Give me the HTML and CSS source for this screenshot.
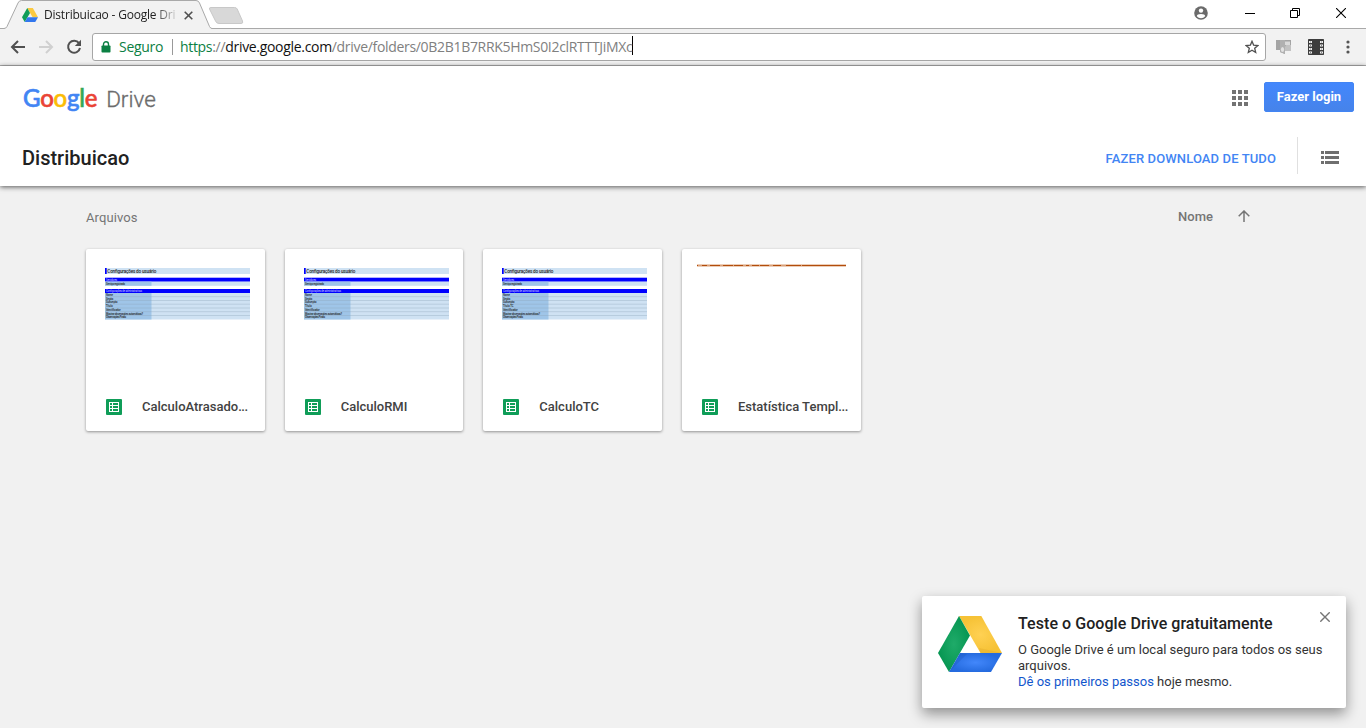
FILE: index.html
```html
<!DOCTYPE html>
<html lang="pt-BR">
<head>
<meta charset="utf-8">
<title>Distribuicao - Google Drive</title>
<link rel="stylesheet" href="styles.css">
</head>
<body>
<svg class="defs" width="0" height="0">
  <symbol id="drive" viewBox="0 0 64 56">
    <path d="M21 0H43.300L64 37H42.500Z" fill="#fbc941"/>
    <path d="M21 0L32 19.500L11 56L0 37Z" fill="#0f9d58"/>
    <path d="M22 37H64L53 56H11Z" fill="#3277ee"/>
  </symbol>
  <symbol id="sheet-icon" viewBox="0 0 16 16">
    <rect width="16" height="16" rx="1" fill="#0f9d58"/>
    <path d="M3 3h10v10H3z" fill="#fff"/>
    <path d="M4 4h2v2H4zM7 4h5v2H7zM4 7h2v2H4zM7 7h5v2H7zM4 10h2v2H4zM7 10h5v2H7z" fill="#0f9d58"/>
  </symbol>
  <symbol id="sheet-bg" viewBox="0 0 146 52">
    <rect width="145" height="6" fill="#cfe2f3"/>
    <rect width="1.700" height="6" fill="#00f"/>
    <rect y="9.700" width="145" height="4" fill="#00f"/>
    <rect y="13.700" width="145" height="4.100" fill="#cfe2f3"/>
    <rect y="13.700" width="46.500" height="4.100" fill="#9fc5e8"/>
    <rect y="21" width="145" height="4" fill="#00f"/>
    <rect y="25" width="145" height="26.500" fill="#cfe2f3"/>
    <rect y="25" width="46.500" height="26.500" fill="#9fc5e8"/>
    <path d="M0 28.700H145M0 32.500H145M0 36.200H145M0 40H145M0 43.700H145M0 47.500H145" stroke="#8ba3b8" stroke-width=".35"/>
  </symbol>
</svg>

<div class="tabstrip">
  <svg class="tabs" width="250" height="30" viewBox="0 0 250 30">
    <path d="M0 28.500H4Q6 28.500 7 26.500L18 3Q19 .5 21.500 .5H196Q198.500 .5 199.500 3L209.500 26.500Q210.500 28.500 212 28.500H250V30H0Z" fill="#f2f2f2"/>
    <path d="M0 28.500H4Q6 28.500 7 26.500L18 3Q19 .5 21.500 .5H196Q198.500 .5 199.500 3L209.500 26.500Q210.500 28.500 212 28.500H250" fill="none" stroke="#a9a9a9"/>
    <path d="M211 7.500H234.500Q236.500 7.500 237.200 9L242.500 21Q243.500 23.500 241 23.500H219Q216.500 23.500 215.500 21L209.500 9Q209 7.500 211 7.500Z" fill="#d8d8d8" stroke="#c8c8c8"/>
  </svg>
  <div class="tab">
    <svg width="16" height="14"><use href="#drive"/></svg>
    <span class="tab-title">Distribuicao - Google Dri</span>
    <svg width="9" height="9" viewBox="0 0 9 9"><path d="M.7 .7L8.300 8.300M8.300 .7L.7 8.300" stroke="#505050" stroke-width="1.600"/></svg>
  </div>
  <div class="window">
    <svg width="14" height="14" viewBox="0 0 14 14"><circle cx="7" cy="7" r="6.800" fill="#6b6b6b"/><circle cx="7" cy="4.600" r="2.200" fill="#fff"/><path d="M2.800 10.200Q3 8 7 8T11.200 10.200Q9.500 12.300 7 12.300T2.800 10.200Z" fill="#fff"/></svg>
    <svg class="min" width="10" height="10" viewBox="0 0 10 10"><path d="M0 5.500H10" stroke="#000"/></svg>
    <svg width="10" height="10" viewBox="0 0 10 10"><path d="M.5 2.500H7.500V9.500H.5ZM2.500 2.500V.5H9.500V7.500H7.500" fill="none" stroke="#000"/></svg>
    <svg width="10" height="10" viewBox="0 0 10 10"><path d="M0 0L10 10M10 0L0 10" stroke="#000" stroke-width="1.100"/></svg>
  </div>
</div>

<div class="toolbar">
  <svg width="84" height="18" viewBox="0 0 84 18">
    <path d="M25 9H12.500M18 3L12 9L18 15" fill="none" stroke="#505050" stroke-width="2"/>
    <path d="M39 9H51.500M46 3L52 9L46 15" fill="none" stroke="#d0d0d0" stroke-width="2"/>
    <path d="M79 5.200A6 6 0 1 0 80 10" fill="none" stroke="#505050" stroke-width="2"/><path d="M81 1.800V8H74.800Z" fill="#505050"/>
  </svg>
  <div class="omnibox">
    <svg width="10" height="12" viewBox="0 0 10 12"><path d="M2.500 5V3.300A2.500 2.500 0 0 1 7.500 3.300V5" fill="none" stroke="#0b8043" stroke-width="1.400"/><rect x=".5" y="4.500" width="9" height="7" rx=".8" fill="#0b8043"/></svg>
    <span class="secure">Seguro</span>
    <span class="url"><span class="green">https</span>://<span class="host">drive.google.com</span>/drive/folders/0B2B1B7RRK5HmS0I2clRTTTJiMXc</span>
    <svg class="star" width="14" height="14" viewBox="0 0 14 14"><path d="M7 1.300L8.600 5.100L12.900 5.500L9.700 8.300L10.700 12.500L7 10.300L3.300 12.500L4.300 8.300L1.100 5.500L5.400 5.100Z" fill="none" stroke="#505050" stroke-width="1.300"/></svg>
  </div>
  <div class="ext">
    <svg width="16" height="16" viewBox="0 0 16 16"><path d="M0 1H15V12H9V15L4 13V11H0Z" fill="#a4a4a4"/><path d="M9 2.500H14V6H9Z" fill="#dadada"/><path d="M10 6H15V12H9V8Z" fill="#c2c2c2"/><path d="M4 1H9V15L4 13Z" fill="#b0b0b0"/><ellipse cx="6.500" cy="10.500" rx="1.600" ry="2.500" fill="#e2e2e2"/></svg>
    <svg width="16" height="16" viewBox="0 0 16 16"><rect width="16" height="16" rx=".7" fill="#3d3d3d"/><path d="M1 2h3v2H1zM1 5.500h3v2H1zM1 9h3v2H1zM1 12.500h3v2H1zM12 2h3v2h-3zM12 5.500h3v2h-3zM12 9h3v2h-3zM12 12.500h3v2h-3z" fill="#eee"/><path d="M2 2.500h1v1H2zM2 6h1v1H2zM2 9.500h1v1H2zM2 13h1v1H2zM13 2.500h1v1h-1zM13 6h1v1h-1zM13 9.500h1v1h-1zM13 13h1v1h-1z" fill="#888"/></svg>
    <svg width="4" height="14" viewBox="0 0 4 14"><g fill="#555"><circle cx="2" cy="2" r="1.600"/><circle cx="2" cy="7" r="1.600"/><circle cx="2" cy="12" r="1.600"/></g></svg>
  </div>
</div>

<header class="header">
  <div class="brand-row">
    <div class="logo"><span class="google"><span class="b">G</span><span class="r">o</span><span class="y">o</span><span class="b">g</span><span class="g">l</span><span class="r">e</span></span><span class="product">Drive</span></div>
    <svg class="apps" width="16" height="16" viewBox="0 0 16 16"><path d="M0 0h4v4H0zM6 0h4v4H6zM12 0h4v4h-4zM0 6h4v4H0zM6 6h4v4H6zM12 6h4v4h-4zM0 12h4v4H0zM6 12h4v4H6zM12 12h4v4h-4z" fill="#737373"/></svg>
    <button class="login">Fazer login</button>
  </div>
  <div class="folder-row">
    <h1 class="folder">Distribuicao</h1>
    <span class="download">FAZER DOWNLOAD DE TUDO</span>
    <div class="view"><svg width="18" height="13" viewBox="0 0 18 13"><path d="M0 0h3v3H0zM4 0h14v3H4zM0 5h3v3H0zM4 5h14v3H4zM0 10h3v3H0zM4 10h14v3H4z" fill="#6f6f6f"/></svg></div>
  </div>
</header>

<main class="content">
  <div class="list-head">
    <span class="arquivos">Arquivos</span>
    <span class="nome">Nome</span>
    <svg width="12" height="12" viewBox="0 0 12 12"><path d="M6 12V1.200M.7 6.200L6 1L11.300 6.200" fill="none" stroke="#757575" stroke-width="1.500"/></svg>
  </div>
  <div class="cards">
    <div class="card">
      <svg class="thumb" viewBox="0 0 146 52"><use href="#sheet-bg"/>
        <text x="2.300" y="4.700" class="t-title" textLength="49">Configurações do usuário</text>
        <text x="1" y="12.700" class="t-head" textLength="11">Servidores</text>
        <text x="1" y="16.700" class="t-row" textLength="19">Serviço registrado</text>
        <text x="1" y="24" class="t-head" textLength="36">Configurações de administrativas</text>
        <text x="1" y="27.800" class="t-row">Nome</text><text x="1" y="31.600" class="t-row">Seção</text><text x="1" y="35.300" class="t-row">Subseção</text><text x="1" y="39.100" class="t-row">Título</text><text x="1" y="42.800" class="t-row">Identificador</text><text x="1" y="46.600" class="t-row" textLength="37">Mostrar observações automáticas?</text><text x="1" y="50.400" class="t-row" textLength="20">Observações Finais</text>
      </svg>
      <div class="label"><svg width="16" height="16"><use href="#sheet-icon"/></svg><span>CalculoAtrasado<i>...</i></span></div>
    </div>
    <div class="card">
      <svg class="thumb" viewBox="0 0 146 52"><use href="#sheet-bg"/>
        <text x="2.300" y="4.700" class="t-title" textLength="49">Configurações do usuário</text>
        <text x="1" y="12.700" class="t-head" textLength="11">Servidores</text>
        <text x="1" y="16.700" class="t-row" textLength="19">Serviço registrado</text>
        <text x="1" y="24" class="t-head" textLength="36">Configurações de administrativas</text>
        <text x="1" y="27.800" class="t-row">Nome</text><text x="1" y="31.600" class="t-row">Seção</text><text x="1" y="35.300" class="t-row">Subseção</text><text x="1" y="39.100" class="t-row">Título</text><text x="1" y="42.800" class="t-row">Identificador</text><text x="1" y="46.600" class="t-row" textLength="37">Mostrar observações automáticas?</text><text x="1" y="50.400" class="t-row" textLength="20">Observações Finais</text>
      </svg>
      <div class="label"><svg width="16" height="16"><use href="#sheet-icon"/></svg><span>CalculoRMI</span></div>
    </div>
    <div class="card">
      <svg class="thumb" viewBox="0 0 146 52"><use href="#sheet-bg"/>
        <text x="2.300" y="4.700" class="t-title" textLength="49">Configurações do usuário</text>
        <text x="1" y="12.700" class="t-head" textLength="11">Servidores</text>
        <text x="1" y="16.700" class="t-row" textLength="19">Serviço registrado</text>
        <text x="1" y="24" class="t-head" textLength="36">Configurações de administrativas</text>
        <text x="1" y="27.800" class="t-row">Nome</text><text x="1" y="31.600" class="t-row">Seção</text><text x="1" y="35.300" class="t-row">Subseção</text><text x="1" y="39.100" class="t-row">Título TC</text><text x="1" y="42.800" class="t-row">Identificador</text><text x="1" y="46.600" class="t-row" textLength="37">Mostrar observações automáticas?</text><text x="1" y="50.400" class="t-row" textLength="20">Observações Finais</text>
      </svg>
      <div class="label"><svg width="16" height="16"><use href="#sheet-icon"/></svg><span>CalculoTC</span></div>
    </div>
    <div class="card">
      <svg class="thumb strip" viewBox="0 0 150 3"><rect width="149" height="3" fill="#eccdb7"/><rect y="1" width="149" height="1" fill="#b24d0c"/><path d="M1 1.500h4M10 1.500h3M23 1.500h3M36 1.500h1M46 1.500h3M52 1.500h3M62 1.500h1M72 1.500h4M84 1.500h5M104 1.500h1" stroke="#d9a17a"/></svg>
      <div class="label"><svg width="16" height="16"><use href="#sheet-icon"/></svg><span>Estatística Templ<i>...</i></span></div>
    </div>
  </div>
</main>

<aside class="promo">
  <svg width="64" height="56" viewBox="0 0 64 56">
    <defs>
      <radialGradient id="pg"><stop offset="0" stop-color="#1fab69"/><stop offset="1" stop-color="#069652"/></radialGradient>
      <radialGradient id="py"><stop offset="0" stop-color="#ffd153"/><stop offset="1" stop-color="#f6c236"/></radialGradient>
      <radialGradient id="pb"><stop offset="0" stop-color="#4287fb"/><stop offset="1" stop-color="#256bdf"/></radialGradient>
    </defs>
    <path d="M21 0H43.300L64 37H42.500Z" fill="url(#py)"/>
    <path d="M21 0L32 19.500L11 56L0 37Z" fill="url(#pg)"/>
    <path d="M22 37H64L53 56H11Z" fill="url(#pb)"/>
    <path d="M41 32L64 37H42.500Z" fill="#dda52a" opacity=".35"/>
    <path d="M11 56L22 37L29 38Z" fill="#174fb3" opacity=".25"/>
  </svg>
  <div class="promo-text">
    <h2>Teste o Google Drive gratuitamente</h2>
    <p>O Google Drive é um local seguro para todos os seus arquivos.<br><a>Dê os primeiros passos</a> hoje mesmo.</p>
  </div>
  <svg class="close" width="10" height="10" viewBox="0 0 10 10"><path d="M.3 .3L9.700 9.700M9.700 .3L.3 9.700" stroke="#757575" stroke-width="1.400"/></svg>
</aside>
</body>
</html>
```
FILE: styles.css
```css
* { box-sizing: border-box; }
body { margin: 0; width: 1366px; height: 728px; overflow: hidden; background: #f1f1f1; font-family: Roboto, sans-serif; font-size: 13px; display: flex; flex-direction: column; }
svg { display: block; flex: none; }
.defs { position: absolute; }
.tabstrip { height: 29px; flex: none; background: #fff; border-bottom: 1px solid #a9a9a9; display: flex; justify-content: space-between; position: relative; }
.tabs { position: absolute; left: 0; top: 0; }
.tab { position: relative; display: flex; align-items: center; padding: 2px 0 0 22px; height: 28px; }
.tab-title { width: 132px; margin: 0 8px 0 6px; white-space: nowrap; font: 12px/18px "Open Sans", sans-serif; letter-spacing: -.2px; color: #222; -webkit-mask-image: linear-gradient(90deg, #000 110px, transparent 136px); mask-image: linear-gradient(90deg, #000 110px, transparent 136px); }
.window { display: flex; align-items: center; padding: 0 20px 2px 0; gap: 36px; }
.min { margin: 0 -1px 0 1px; }
.toolbar { height: 37px; flex: none; background: #f2f2f2; border-bottom: 1px solid #b0b0b0; display: flex; align-items: center; }
.omnibox { margin-left: 8px; width: 1174px; height: 28px; background: #fff; border: 1px solid #a6a6a6; border-radius: 3px; display: flex; align-items: center; padding: 0 6px 0 8px; font: 14px/20px "Open Sans", sans-serif; }
.secure { color: #0b8043; width: 62px; padding-left: 8px; height: 16px; line-height: 16px; border-right: 1px solid #999; letter-spacing: -.3px; }
.url { color: #808080; margin: -3px 0 0 7px; letter-spacing: -.315px; border-right: 1px solid #000; height: 19px; line-height: 21px; white-space: nowrap; }
.green { color: #0b8043; }
.host { color: #111; }
.star { margin-left: auto; }
.ext { display: flex; align-items: center; margin-left: 10px; gap: 16px; }
.ext svg:last-child { margin-left: 6px; }
.header { height: 120px; flex: none; background: #fff; box-shadow: 0 1px 5px rgba(0,0,0,.65); position: relative; padding-left: 22px; }
.brand-row { height: 64px; display: flex; align-items: center; padding-right: 12px; }
.logo { display: flex; align-items: baseline; margin: -1px auto 0 0; padding-left: 1px; font-family: Lato, sans-serif; }
.google { font-size: 24px; font-weight: 500; letter-spacing: -.25px; -webkit-text-stroke: .6px; }
.b { color: #4285f4; } .r { color: #ea4335; } .y { color: #fbbc05; } .g { color: #34a853; }
.product { font: 300 22.500px/26px Roboto, sans-serif; color: #6b6b6b; margin-left: 9px; -webkit-text-stroke: .35px; }
.apps { margin-right: 16px; }
.login { width: 90px; height: 30px; margin-top: -2px; border: 1px solid #4285f4; border-radius: 2px; background: linear-gradient(#4387fd, #4683ea); color: #fff; font: bold 13px Roboto, sans-serif; padding: 0 0 2px; }
.folder-row { display: flex; align-items: center; height: 54px; }
.folder { margin: 2px auto 0 0; font-size: 20px; font-weight: 500; color: #212121; }
.download { margin-top: 2px; color: #4285f4; font-weight: 500; letter-spacing: .12px; }
.view { margin: -4px 0 0 21px; padding: 4px 0 0 23px; border-left: 1px solid #e0e0e0; width: 69px; height: 37px; display: flex; align-items: center; }
.list-head { display: flex; align-items: center; height: 62px; padding: 0 116px 0 86px; color: #757575; }
.list-head svg { margin-top: -2px; }
.arquivos { margin-right: auto; font-weight: 400; letter-spacing: .1px; }
.nome { font-weight: 500; margin: -2px 25px 0 0; }
.cards { display: grid; grid-template-columns: repeat(4, 178.670px); column-gap: 20px; padding: 1px 0 0 86px; }
.card { height: 182px; background: #fff; border-radius: 2px; box-shadow: 0 1px 3px rgba(0,0,0,.4); display: flex; flex-direction: column; }
.thumb { width: 146px; height: 52px; margin: 19px 0 0 19px; }
.strip { width: 150px; height: 3px; margin: 15px 0 0 15px; }
.t-title { font-size: 4.600px; font-weight: 500; fill: #222; }
.t-head { font-size: 2.600px; fill: #ccf; }
.t-row { font-size: 2.600px; font-weight: 500; fill: #222; }
.label { margin-top: auto; height: 48px; display: flex; align-items: center; gap: 20px; padding-left: 20px; font-weight: 500; color: #424242; white-space: nowrap; }
.label span { margin-top: -2px; }
.label i { font-style: normal; letter-spacing: -.4px; }
.promo { position: absolute; left: 922px; top: 596px; width: 424px; height: 112px; background: #fff; border-radius: 2px; box-shadow: 0 6px 14px rgba(0,0,0,.4); display: flex; padding: 20px 16px; }
.promo-text { margin-left: 16px; width: 300px; }
.promo h2 { margin: -2px 0 8px; font-size: 16px; line-height: 20px; font-weight: 500; letter-spacing: .06px; color: #212121; }
.promo p { margin: 0; font-size: 13px; line-height: 16px; color: #333; width: 308px; }
.promo a { color: #1155cc; }
.close { margin: -4px 0 0 2px; }
```
